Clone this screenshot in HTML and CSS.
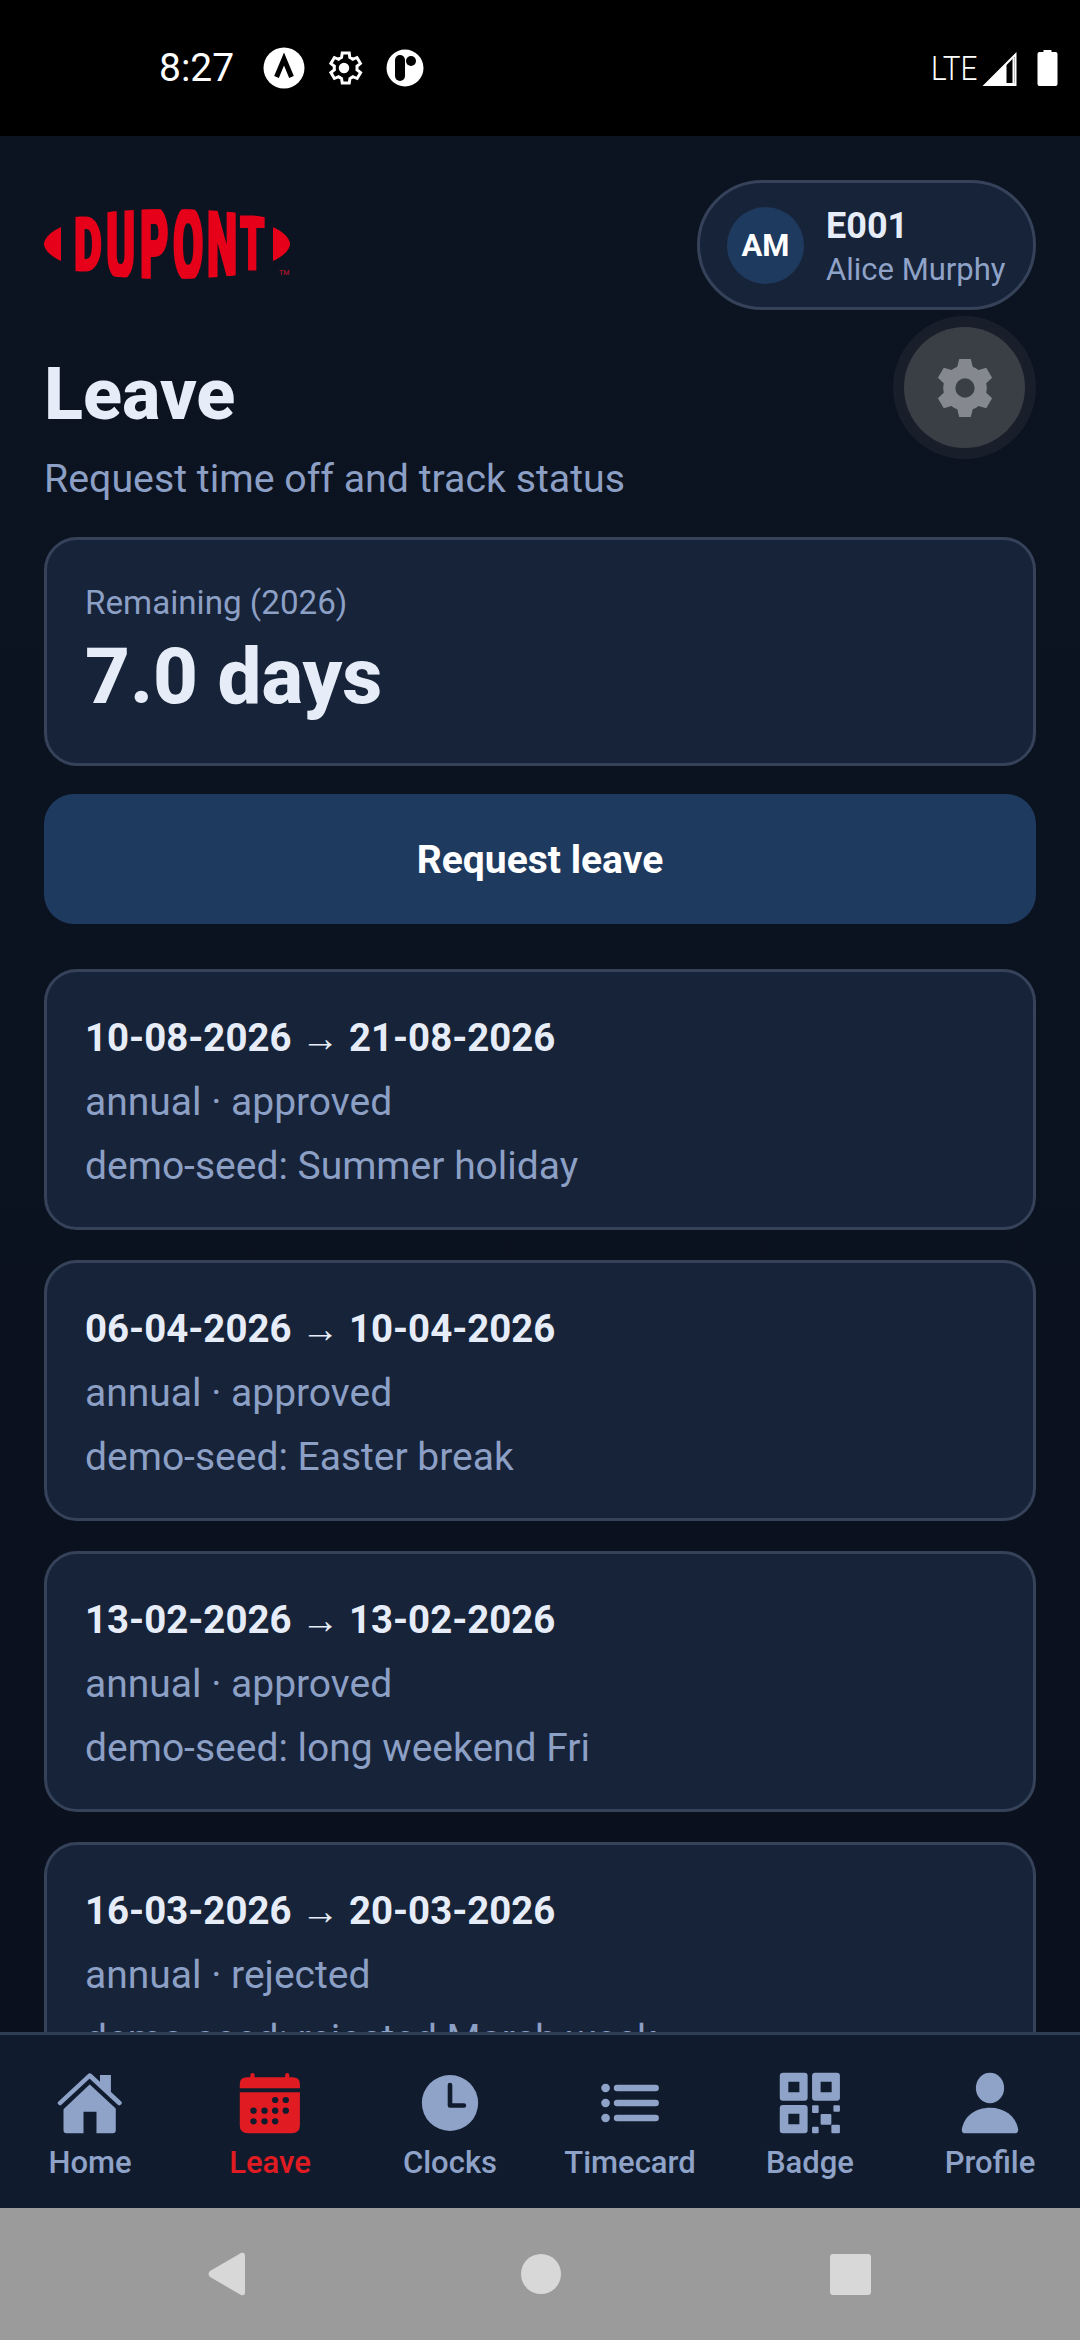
FILE: index.html
```html
<!DOCTYPE html>
<html lang="en">
<head>
  <meta charset="UTF-8">
  <title>Leave</title>
  <meta name="viewport" content="width=device-width, initial-scale=1.0">
  <link rel="stylesheet" href="styles.css">
</head>
<body>
  <div class="screen">
    <div class="statusbar">
      <div class="status-left">
        <span class="clock-text">8:27</span>
        <svg class="st-icon st-a" viewBox="0 0 42 42"><circle cx="21" cy="21" r="20.500" fill="#fff"/><path d="M13.500 30 L21 12 L28.500 30" fill="none" stroke="#000" stroke-width="5"/></svg>
        <svg class="st-icon st-gear" viewBox="0 0 24 24"><path fill="none" stroke="#fff" stroke-width="1.700" d="M19.400 13a7.600 7.600 0 0 0 0-2l2-1.600-2-3.400-2.400 1a7.500 7.500 0 0 0-1.700-1L15 3.400h-4l-.4 2.600a7.500 7.500 0 0 0-1.700 1l-2.400-1-2 3.400 2 1.600a7.600 7.600 0 0 0 0 2l-2 1.600 2 3.400 2.400-1a7.500 7.500 0 0 0 1.700 1l.4 2.600h4l.4-2.600a7.500 7.500 0 0 0 1.700-1l2.400 1 2-3.400z"/><circle cx="12" cy="12" r="3" fill="#fff"/></svg>
        <svg class="st-icon st-p" viewBox="0 0 38 38"><circle cx="19" cy="19" r="18.500" fill="#fff"/><rect x="9" y="6" width="10" height="26" rx="5" fill="#000"/><circle cx="25" cy="12" r="5" fill="#000"/></svg>
      </div>
      <div class="status-right">
        <span class="lte">LTE</span>
        <svg class="st-signal" viewBox="0 0 34 34"><path d="M0 34 L34 0 V34 Z" fill="#fff"/><path d="M24 13 V32 H32 V5 Z" fill="#000"/><path d="M31 6 V32" stroke="#fff" stroke-width="2"/><path d="M23 32 H32" stroke="#fff" stroke-width="2"/></svg>
        <svg class="st-battery" viewBox="0 0 20 36"><path d="M6 0 H14 V2 H18 Q20 2 20 4 V34 Q20 36 18 36 H2 Q0 36 0 34 V4 Q0 2 2 2 H6 Z" fill="#fff"/></svg>
      </div>
    </div>

    <div class="content">
      <div class="topbar">
        <svg class="logo" viewBox="0 0 248 72">
          <defs>
            <clipPath id="lens"><ellipse cx="125" cy="35" rx="150" ry="35"/></clipPath>
          </defs>
          <path class="logo-red" d="M17 18 V52 C8 48 0 41 0 35 C0 29 8 22 17 18 Z"/>
          <path class="logo-red" d="M229 18 V52 C238 48 246 41 246 35 C246 29 238 22 229 18 Z"/>
          <g clip-path="url(#lens)">
            <text class="logo-letter" transform="translate(30 61) scale(4.300 7.200)">D</text>
            <text class="logo-letter" transform="translate(62 68) scale(4.400 9.200)">U</text>
            <text class="logo-letter" transform="translate(96 70) scale(4.400 9.800)">P</text>
            <text class="logo-letter" transform="translate(129 70) scale(4.400 9.800)">O</text>
            <text class="logo-letter" transform="translate(163 67) scale(4.300 9)">N</text>
            <text class="logo-letter" transform="translate(196 60) scale(3.900 7.200)">T</text>
          </g>
          <text class="logo-tm" x="235" y="66">TM</text>
        </svg>
        <div class="user-pill">
          <div class="avatar">AM</div>
          <div class="user-text">
            <div class="user-id">E001</div>
            <div class="user-name">Alice Murphy</div>
          </div>
        </div>
      </div>

      <div class="fab">
        <div class="fab-inner">
          <svg class="fab-gear" viewBox="0 0 56 60"><path fill-rule="evenodd" fill="#85898f" d="M22 0 H34 L36 8 A22 22 0 0 1 42 11.500 L50 9 L56 19.500 L50 25 A22 22 0 0 1 50 35 L56 40.500 L50 51 L42 48.500 A22 22 0 0 1 36 52 L34 60 H22 L20 52 A22 22 0 0 1 14 48.500 L6 51 L0 40.500 L6 35 A22 22 0 0 1 6 25 L0 19.500 L6 9 L14 11.500 A22 22 0 0 1 20 8 Z M28 20 A10 10 0 1 0 28 40 A10 10 0 1 0 28 20 Z"/></svg>
        </div>
      </div>

      <h1 class="title">Leave</h1>
      <p class="subtitle">Request time off and track status</p>

      <div class="card balance">
        <div class="balance-label">Remaining (2026)</div>
        <div class="balance-value">7.0 days</div>
      </div>

      <button class="request-btn">Request leave</button>

      <div class="leave-list">
        <div class="card leave-item">
          <div class="leave-dates">10-08-2026 → 21-08-2026</div>
          <div class="leave-line">annual · approved</div>
          <div class="leave-line">demo-seed: Summer holiday</div>
        </div>
        <div class="card leave-item">
          <div class="leave-dates">06-04-2026 → 10-04-2026</div>
          <div class="leave-line">annual · approved</div>
          <div class="leave-line">demo-seed: Easter break</div>
        </div>
        <div class="card leave-item">
          <div class="leave-dates">13-02-2026 → 13-02-2026</div>
          <div class="leave-line">annual · approved</div>
          <div class="leave-line">demo-seed: long weekend Fri</div>
        </div>
        <div class="card leave-item">
          <div class="leave-dates">16-03-2026 → 20-03-2026</div>
          <div class="leave-line">annual · rejected</div>
          <div class="leave-line">demo-seed: rejected March week</div>
        </div>
      </div>
    </div>

    <nav class="tabbar">
      <div class="tab">
        <svg class="tab-icon" viewBox="0 0 64 64" preserveAspectRatio="none"><path class="ic" d="M41.700 4 H52.300 V24 H41.700 Z"/><path class="ic" d="M31.700 12.300 L57 36 V59 Q57 62.300 54 62.300 H38.300 V40.700 H25.700 V62.300 H9.300 Q6.300 62.300 6.300 59 V36 Z"/><path fill="none" stroke="#101c2e" stroke-width="5" d="M4 37 L31.700 10 L60 37"/><path fill="none" stroke="#8fa2c8" stroke-width="4.500" stroke-linecap="round" stroke-linejoin="round" d="M3 32 L31.700 4.500 L60.500 32"/></svg>
        <span class="tab-label">Home</span>
      </div>
      <div class="tab tab-active">
        <svg class="tab-icon" viewBox="0 0 64 64" preserveAspectRatio="none"><path class="ic-red" d="M2.700 17.300 V13 Q2.700 6.300 9.500 6.300 H13 V3.500 Q13 2 15 2 Q17 2 17 3.500 V6.300 H46.700 V3.500 Q46.700 2 48.700 2 Q50.700 2 50.700 3.500 V6.300 H54 Q61 6.300 61 13 V17.300 Z"/><path class="ic-red" d="M2.700 21.300 H61 V54 Q61 62.300 53 62.300 H10.700 Q2.700 62.300 2.700 54 Z"/><g class="dots"><circle cx="37" cy="29" r="3.100"/><circle cx="47.300" cy="29" r="3.100"/><circle cx="16" cy="39.700" r="3.100"/><circle cx="26.700" cy="39.700" r="3.100"/><circle cx="37" cy="39.700" r="3.100"/><circle cx="47.300" cy="39.700" r="3.100"/><circle cx="16" cy="50.300" r="3.100"/><circle cx="26.700" cy="50.300" r="3.100"/><circle cx="37" cy="50.300" r="3.100"/></g></svg>
        <span class="tab-label">Leave</span>
      </div>
      <div class="tab">
        <svg class="tab-icon" viewBox="0 0 64 64" preserveAspectRatio="none"><ellipse class="ic" cx="32" cy="32" rx="27.300" ry="28"/><path fill="none" stroke="#101c2e" stroke-width="4.500" stroke-linecap="round" stroke-linejoin="round" d="M32 14 V34.500 H45.500"/></svg>
        <span class="tab-label">Clocks</span>
      </div>
      <div class="tab">
        <svg class="tab-icon" viewBox="0 0 64 64" preserveAspectRatio="none"><g class="ic"><circle cx="8.300" cy="17" r="4.200"/><circle cx="8.300" cy="32" r="4.200"/><circle cx="8.300" cy="47" r="4.200"/><rect x="16.300" y="13.800" width="43.700" height="6.400" rx="3.200"/><rect x="16.300" y="28.800" width="43.700" height="6.400" rx="3.200"/><rect x="16.300" y="43.800" width="43.700" height="6.400" rx="3.200"/></g></svg>
        <span class="tab-label">Timecard</span>
      </div>
      <div class="tab">
        <svg class="tab-icon" viewBox="0 0 64 64" preserveAspectRatio="none"><g class="ic"><path fill-rule="evenodd" d="M6 1.700 H26.700 Q29.700 1.700 29.700 4.700 V26.700 Q29.700 29.700 26.700 29.700 H5.700 Q2.700 29.700 2.700 26.700 V4.700 Q2.700 1.700 6 1.700 Z M11 10.700 V21.300 H21.700 V10.700 Z"/><path fill-rule="evenodd" d="M37 1.700 H58 Q61 1.700 61 4.700 V26.700 Q61 29.700 58 29.700 H37 Q34 29.700 34 26.700 V4.700 Q34 1.700 37 1.700 Z M42.300 10.700 V21.300 H53 V10.700 Z"/><path fill-rule="evenodd" d="M5.700 34 H26.700 Q29.700 34 29.700 37 V59.300 Q29.700 62.300 26.700 62.300 H5.700 Q2.700 62.300 2.700 59.300 V37 Q2.700 34 5.700 34 Z M11 42.700 V53.300 H21.700 V42.700 Z"/><rect x="34" y="34.300" width="6.400" height="7.700" rx="1"/><rect x="54.700" y="34.300" width="6.300" height="6.400" rx="1"/><rect x="42.300" y="43" width="10.400" height="10.700" rx="1"/><rect x="34" y="55.700" width="6.400" height="6.600" rx="1"/><rect x="52.700" y="53.700" width="8.300" height="8.600" rx="1"/></g></svg>
        <span class="tab-label">Badge</span>
      </div>
      <div class="tab">
        <svg class="tab-icon" viewBox="0 0 64 64" preserveAspectRatio="none"><ellipse class="ic" cx="32" cy="17" rx="13.700" ry="15.300"/><path class="ic" d="M32 36.700 C46 36.700 57 45 59.300 58 Q59.800 62.300 56 62.300 H8 Q4.200 62.300 4.700 58 C7 45 18 36.700 32 36.700 Z"/></svg>
        <span class="tab-label">Profile</span>
      </div>
    </nav>

    <div class="androidbar">
      <svg class="nav-back" viewBox="0 0 38 46"><path d="M34 2 L3 20 Q0 23 3 26 L34 44 Q38 45 38 41 V5 Q38 1 34 2 Z"/></svg>
      <div class="nav-home"></div>
      <div class="nav-recent"></div>
    </div>
  </div>
</body>
</html>
```

FILE: styles.css
```css
* {
  box-sizing: border-box;
}
body {
  margin: 0;
  background: #000;
  font-family: Roboto, 'Noto Sans', sans-serif;
  color: #e6edf8;
}
.screen {
  width: 1080px;
  height: 2340px;
  display: flex;
  flex-direction: column;
  overflow: hidden;
}

/* status bar */
.statusbar {
  height: 136px;
  flex-shrink: 0;
  background: #000;
  display: flex;
  justify-content: space-between;
  align-items: center;
  padding: 0 22px 0 159px;
  color: #fff;
}
.status-left, .status-right {
  display: flex;
  align-items: center;
}
.clock-text {
  font-size: 39px;
  width: 104px;
}
.st-a {
  width: 42px;
  height: 42px;
}
.st-gear {
  width: 42px;
  height: 42px;
  margin-left: 18px;
}
.st-p {
  width: 38px;
  height: 38px;
  margin-left: 21px;
}
.lte {
  font-weight: 300;
  font-size: 33px;
  width: 51px;
  display: inline-block;
  transform: scaleX(0.9);
  transform-origin: left center;
}
.st-signal {
  width: 35px;
  height: 34px;
  margin-top: 1px;
}
.st-battery {
  width: 21px;
  height: 36px;
  margin-left: 20px;
}

/* page */
.content {
  flex: 1;
  min-height: 0;
  position: relative;
  overflow: hidden;
  padding: 44px 44px 0;
  background: linear-gradient(180deg, #0c1421, #0a101e);
}
.topbar {
  display: flex;
  justify-content: space-between;
  align-items: center;
  height: 130px;
}
.logo {
  width: 248px;
  height: 72px;
  overflow: visible;
}
.logo-red {
  fill: #e60019;
}
.logo-letter {
  font-family: Roboto, sans-serif;
  font-weight: 900;
  font-size: 10px;
  fill: #e60019;
  stroke: #e60019;
  stroke-width: 0.4px;
}
.logo-tm {
  font-family: Roboto, sans-serif;
  font-size: 7px;
  fill: #c81428;
}
.user-pill {
  width: 339px;
  height: 130px;
  border: 3px solid #354259;
  border-radius: 65px;
  background: #172338;
  display: flex;
  align-items: center;
  padding-left: 27px;
  gap: 22px;
}
.avatar {
  width: 77px;
  height: 77px;
  border-radius: 50%;
  background: #1f3a5f;
  color: #fff;
  font-weight: 700;
  font-size: 31px;
  display: flex;
  align-items: center;
  justify-content: center;
}
.user-id {
  font-size: 36px;
  font-weight: 700;
  line-height: 44px;
  margin-top: 6px;
}
.user-name {
  font-size: 31px;
  line-height: 44px;
  color: #8fa2c8;
}
.fab {
  position: absolute;
  right: 44px;
  top: 180px;
  width: 143px;
  height: 143px;
  border-radius: 50%;
  background: #181f2b;
  display: flex;
  align-items: center;
  justify-content: center;
}
.fab-inner {
  width: 121px;
  height: 121px;
  border-radius: 50%;
  background: #3a3e45;
  display: flex;
  align-items: center;
  justify-content: center;
}
.fab-gear {
  width: 56px;
  height: 58px;
}
.title {
  margin: 46px 0 0;
  font-size: 72px;
  line-height: 78px;
  font-weight: 800;
}
.subtitle {
  margin: 21px 0 0;
  font-size: 39.300px;
  line-height: 48px;
  color: #8c9fc5;
}
.card {
  background: #172338;
  border: 3px solid #354259;
  border-radius: 33px;
}
.balance {
  margin-top: 34px;
  height: 229px;
  padding: 41px 38px 0;
}
.balance-label {
  font-size: 33.200px;
  line-height: 44px;
  color: #8c9fc5;
}
.balance-value {
  font-size: 78px;
  font-weight: 800;
  line-height: 104px;
}
.request-btn {
  display: block;
  width: 100%;
  height: 130px;
  margin-top: 28px;
  padding: 2px 0 0;
  border: none;
  border-radius: 30px;
  background: #1f3a5f;
  color: #fff;
  font-family: Roboto, sans-serif;
  font-size: 39px;
  font-weight: 700;
}
.leave-list {
  margin-top: 45px;
  display: flex;
  flex-direction: column;
  gap: 30px;
}
.leave-item {
  height: 261px;
  flex-shrink: 0;
  padding: 34px 38px 0;
}
.leave-dates {
  font-size: 38.400px;
  font-weight: 700;
  line-height: 64px;
}
.leave-line {
  font-size: 39px;
  line-height: 64px;
  color: #8c9fc5;
}

/* bottom tabs */
.tabbar {
  height: 176px;
  flex-shrink: 0;
  background: #101c2e;
  border-top: 3px solid #2f3d55;
  display: grid;
  grid-template-columns: repeat(6, 1fr);
  padding-top: 36px;
}
.tab {
  display: flex;
  flex-direction: column;
  align-items: center;
  color: #8fa2c8;
}
.tab-active {
  color: #e11b22;
}
.tab-icon {
  width: 66px;
  height: 64px;
  display: block;
}
.tab-label {
  margin-top: 9px;
  font-size: 31px;
  font-weight: 500;
  line-height: 38px;
  white-space: nowrap;
}
.ic {
  fill: #8fa2c8;
}
.ic-red {
  fill: #e11b22;
}
.dots {
  fill: #101c2e;
}

/* android nav */
.androidbar {
  height: 132px;
  flex-shrink: 0;
  background: #9b9b9b;
  display: flex;
  align-items: center;
  padding-left: 207px;
}
.nav-back {
  width: 38px;
  height: 46px;
  fill: #d8d8d8;
}
.nav-home {
  width: 40px;
  height: 40px;
  border-radius: 50%;
  background: #d8d8d8;
  margin-left: 276px;
}
.nav-recent {
  width: 41px;
  height: 41px;
  border-radius: 3px;
  background: #d8d8d8;
  margin-left: 269px;
}
```
